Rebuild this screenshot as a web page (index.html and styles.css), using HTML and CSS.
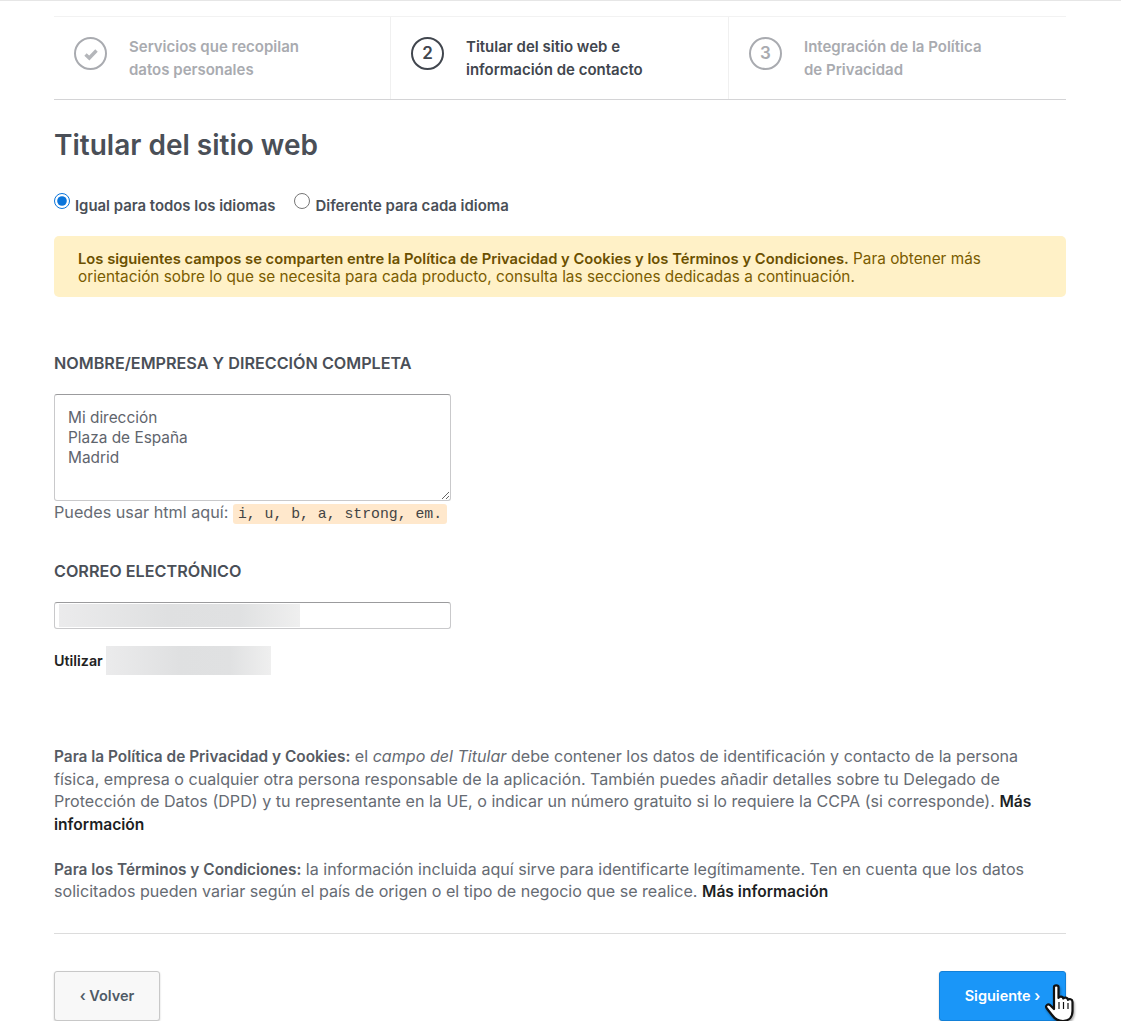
FILE: index.html
```html
<!DOCTYPE html>
<html lang="en">
<head>
    <meta charset="UTF-8">
    <title>Titular del sitio web</title>
    <link rel="stylesheet" href="styles.css">
</head>
<body>
    <div class="container">
        <ul class="steps">
            <li class="step step-done">
                <span class="step-circle">
                    <svg width="16" height="14" viewBox="0 0 16 14"><path d="M2.5 7.5 L6.3 11 L13.5 3.5" fill="none" stroke="#b4b6ba" stroke-width="3.4"/></svg>
                </span>
                <span class="step-text">Servicios que recopilan<br>datos personales</span>
            </li>
            <li class="step step-active">
                <span class="step-circle">2</span>
                <span class="step-text">Titular del sitio web e<br>información de contacto</span>
            </li>
            <li class="step">
                <span class="step-circle">3</span>
                <span class="step-text">Integración de la Política<br>de Privacidad</span>
            </li>
        </ul>

        <h1>Titular del sitio web</h1>

        <div class="radios">
            <label><input type="radio" name="lang" checked>Igual para todos los idiomas</label>
            <label><input type="radio" name="lang">Diferente para cada idioma</label>
        </div>

        <div class="notice">
            <strong>Los siguientes campos se comparten entre la Política de Privacidad y Cookies y los Términos y Condiciones.</strong> Para obtener más orientación sobre lo que se necesita para cada producto, consulta las secciones dedicadas a continuación.
        </div>

        <section class="field field-address">
            <h2>NOMBRE/EMPRESA Y DIRECCIÓN COMPLETA</h2>
            <textarea class="input" rows="4">Mi dirección
Plaza de España
Madrid</textarea>
            <p class="hint">Puedes usar html aquí: <code>i, u, b, a, strong, em.</code></p>
        </section>

        <section class="field field-email">
            <h2>CORREO ELECTRÓNICO</h2>
            <div class="input input-email"><span class="blur blur-email"></span></div>
            <p class="use"><strong>Utilizar</strong><span class="blur blur-use"></span></p>
        </section>

        <section class="info">
            <p><strong>Para la Política de Privacidad y Cookies:</strong> el <em>campo del Titular</em> debe contener los datos de identificación y contacto de la persona física, empresa o cualquier otra persona responsable de la aplicación. También puedes añadir detalles sobre tu Delegado de Protección de Datos (DPD) y tu representante en la UE, o indicar un número gratuito si lo requiere la CCPA (si corresponde). <a href="#">Más información</a></p>
            <p><strong>Para los Términos y Condiciones:</strong> la información incluida aquí sirve para identificarte legítimamente. Ten en cuenta que los datos solicitados pueden variar según el país de origen o el tipo de negocio que se realice. <a href="#">Más información</a></p>
        </section>

        <footer class="actions">
            <a class="btn btn-back" href="#">‹ Volver</a>
            <a class="btn btn-next" href="#">Siguiente ›
                <svg class="cursor" width="36" height="42" viewBox="0 0 36 42">
                    <path d="M11 3 C11 0.8 15.5 0.8 15.5 3 L15.5 14 C16 12 20 12 20.3 14.5 C21 13 24.8 13.2 25 15.8 C26 14.6 29.5 15 29.5 18 L29.5 27 C29.5 33 26 37 20 37 C14 37 11.5 34.5 9 31 L3.5 24 C2 21.5 5 19.5 7 21 L11 25 Z" fill="#fff" stroke="#111" stroke-width="2.2" stroke-linejoin="round"/>
                    <path d="M16 18 V25 M20.5 18 V25 M25 19 V25" stroke="#111" stroke-width="1.2" fill="none"/>
                </svg>
            </a>
        </footer>
    </div>
</body>
</html>
```

FILE: styles.css
```css
body {
    font-family: "Inter", Arial, sans-serif;
    color: #666b73;
    background-color: white;
    margin: 0;
    padding: 0;
    border-top: 1px solid #e6e6e6;
}

.container {
    margin: 0 55px 0 54px;
    padding-top: 15px;
}

.steps {
    list-style: none;
    margin: 0;
    padding: 0;
    display: grid;
    grid-template-columns: 336px 338px 338px;
    height: 82px;
    border-top: 1px solid #f2f2f2;
    border-bottom: 1px solid #d4d4d6;
}

.step {
    display: flex;
    align-items: flex-start;
    gap: 22px;
    padding: 18px 0 0 20px;
    border-left: 1px solid #f0f0f0;
    font-size: 15px;
    font-weight: 600;
    line-height: 23px;
    color: #a9abb0;
}

.step:first-child {
    border-left: none;
}

.step-circle {
    width: 29px;
    height: 29px;
    margin-top: 2px;
    border: 2px solid #a9abb0;
    border-radius: 50%;
    display: flex;
    align-items: center;
    justify-content: center;
    font-size: 17px;
    flex-shrink: 0;
}

.step-active {
    color: #41464e;
}

.step-active .step-circle {
    border-color: #41464e;
}

h1 {
    margin: 27px 0 0;
    font-size: 28px;
    line-height: 36px;
    font-weight: 600;
    color: #4a4f57;
}

.radios {
    margin-top: 30px;
    display: flex;
    gap: 19px;
    font-size: 14.9px;
    font-weight: 600;
    line-height: 20px;
    color: #4a4f57;
}

.radios input {
    margin: 0 5px 0 0;
    width: 16px;
    height: 16px;
    accent-color: #0a74da;
    vertical-align: 2px;
}

.notice {
    margin-top: 20px;
    padding: 14px 24px 11px;
    background-color: #fff1c7;
    border-radius: 5px;
    font-size: 15.35px;
    line-height: 18px;
    color: #7a5c00;
}

.notice strong {
    font-size: 14.75px;
    line-height: 1;
    font-weight: 600;
    color: #6b5000;
}

.field h2 {
    margin: 0;
    font-size: 16.2px;
    line-height: 20px;
    font-weight: 600;
    color: #4a4f57;
}

.field-address {
    margin-top: 56px;
}

.field-email {
    margin-top: 35px;
}

.input {
    display: block;
    box-sizing: border-box;
    width: 397px;
    margin-top: 21px;
    border: 1px solid #c9c9cb;
    border-top-color: #9b9b9d;
    border-radius: 3px;
    background-color: white;
}

textarea.input {
    height: 107px;
    padding: 13px 13px 11px;
    font-family: inherit;
    font-size: 15.4px;
    line-height: 20px;
    color: #5f656d;
    outline: none;
}

.input-email {
    height: 27px;
    margin-top: 21px;
    padding: 1px 4px;
}

.blur {
    display: block;
    background: linear-gradient(90deg, #ebebec, #dfe0e1 45%, #e0e1e2 75%, #efefef);
    filter: blur(0.6px);
}

.blur-email {
    width: 241px;
    height: 23px;
}

.hint {
    margin: 0;
    font-size: 16.2px;
    line-height: 23px;
}

.hint code {
    padding: 2px 5px;
    background-color: #ffe8cc;
    border-radius: 3px;
    font-family: "Liberation Mono", monospace;
    font-size: 14.8px;
    color: #444;
}

.use {
    margin: 17px 0 0;
    display: flex;
    align-items: center;
    gap: 3px;
    font-size: 14.3px;
    color: #222;
}

.blur-use {
    width: 165px;
    height: 29px;
}

.use strong {
    font-weight: 600;
}

.info {
    margin-top: 70px;
    font-size: 16.1px;
    line-height: 22.5px;
}

.info p {
    margin: 0 0 22.5px;
}

.info strong {
    font-size: 15.4px;
    line-height: 1;
    font-weight: 600;
    color: #565b63;
}

.info a {
    font-size: 15.6px;
    line-height: 1;
    color: #1c1f24;
    font-weight: 600;
    text-decoration: none;
}

.actions {
    margin-top: 30px;
    padding-top: 37px;
    border-top: 1px solid #dcdcdc;
    display: flex;
    justify-content: space-between;
}

.btn {
    box-sizing: border-box;
    height: 50px;
    display: flex;
    align-items: center;
    justify-content: center;
    border-radius: 3px;
    font-size: 14.5px;
    font-weight: 600;
    text-decoration: none;
}

.btn-back {
    width: 106px;
    background-color: #f8f8f8;
    color: #4f5a66;
    border: 1px solid #c8c8c8;
    box-shadow: 0 1px 2px rgba(0, 0, 0, 0.2);
}

.btn-next {
    position: relative;
    width: 127px;
    background-color: #1a96f8;
    color: white;
    border: 1px solid #1280d8;
    box-shadow: 0 1px 2px rgba(0, 0, 0, 0.2);
}

.cursor {
    position: absolute;
    left: 103px;
    top: 12px;
    filter: drop-shadow(1px 2px 1px rgba(0, 0, 0, 0.35));
}
```
